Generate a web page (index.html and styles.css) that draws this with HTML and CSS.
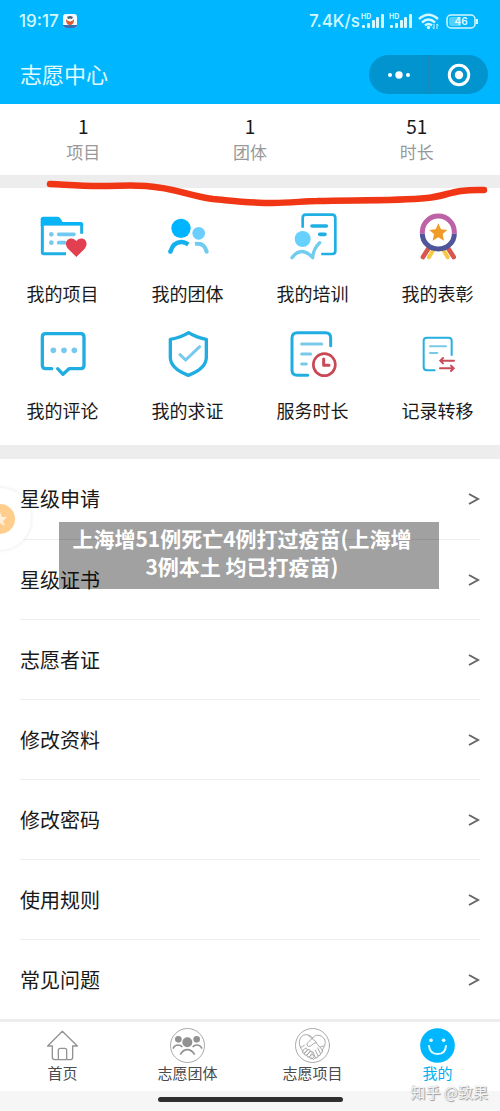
FILE: index.html
```html
<!DOCTYPE html>
<html lang="zh-CN">
<head>
<meta charset="utf-8">
<meta name="viewport" content="width=device-width, initial-scale=1">
<title>志愿中心</title>
<link rel="stylesheet" href="styles.css">
</head>
<body>
<div class="page">
  <header class="header">
    <div class="status">
      <span class="status-text">19:17</span>
      <svg class="app-badge" viewBox="0 0 14 14" aria-hidden="true"><rect width="14" height="14" rx="3" fill="#f4fbff"/><path d="M0 11H14V12Q13 14 11 14H3Q1 14 0 12Z" fill="#3970b5"/><path d="M3 5Q3 11 7 11T11 5L9 7H5Z" fill="#df5b2d"/><path d="M4 3Q7 1 10 3L9 5H5Z" fill="#526579"/><circle cx="7" cy="6" r="1.5" fill="#fff"/></svg>
      <span class="status-text rate">7.4K/s</span>
      <svg class="signal" viewBox="0 0 24 16" aria-hidden="true"><text x="0" y="6" class="hd">HD</text><g fill="#d5f7ff"><rect x="1" y="12" width="3" height="3" rx="1"/><rect x="6" y="10" width="3" height="5" rx="1"/><rect x="11" y="7" width="3" height="8" rx="1"/><rect x="15" y="4" width="3" height="11" rx="1"/><rect x="20" y="1" width="3" height="14" rx="1"/></g></svg>
      <svg class="signal second" viewBox="0 0 24 16" aria-hidden="true"><text x="0" y="6" class="hd">HD</text><g fill="#d5f7ff"><rect x="1" y="12" width="3" height="3" rx="1"/><rect x="6" y="10" width="3" height="5" rx="1"/><rect x="11" y="7" width="3" height="8" rx="1"/><rect x="15" y="4" width="3" height="11" rx="1"/><rect x="20" y="1" width="3" height="14" rx="1"/></g></svg>
      <svg class="wifi" viewBox="0 0 22 17" aria-hidden="true"><g fill="none" stroke="#d5f7ff" stroke-width="2.4"><path d="M1 6Q10.500-2.500 20 6M4 9.500Q10.500 3.500 17 9.500M7 12.500Q10.500 9.500 14 12.500"/></g><circle cx="10.500" cy="14.500" r="1.700" fill="#d5f7ff"/><path d="M16 11V16M14.500 14.500L16 16M19 16V11M20.500 12.500L19 11" stroke="#d5f7ff" fill="none"/></svg>
      <svg class="battery" viewBox="0 0 33 15" aria-hidden="true"><rect x="1" y="1" width="28" height="13" rx="4" fill="none" stroke="#d5f7ff" stroke-width="1.500"/><path d="M3 5Q3 3 5 3H15V12H5Q3 12 3 10Z" fill="#55d0ff"/><path d="M31 5V10" stroke="#d5f7ff" stroke-width="2"/><text x="15" y="11" text-anchor="middle" class="charge">46</text></svg>
    </div>
    <div class="nav">
      <h1>志愿中心</h1>
      <div class="capsule">
        <button type="button" aria-label="更多"><svg viewBox="0 0 24 24"><g fill="#fff"><circle cx="3" cy="12" r="2"/><circle cx="12" cy="12" r="3.700"/><circle cx="21" cy="12" r="2"/></g></svg></button>
        <button type="button" aria-label="关闭"><svg viewBox="0 0 24 24"><circle cx="12" cy="12" r="9.700" fill="none" stroke="#fff" stroke-width="3"/><circle cx="12" cy="12" r="4.200" fill="#fff"/></svg></button>
      </div>
    </div>
  </header>

  <main>
    <dl class="stats">
      <div><dt>项目</dt><dd>1</dd></div>
      <div><dt>团体</dt><dd>1</dd></div>
      <div><dt>时长</dt><dd>51</dd></div>
    </dl>

    <nav class="services" aria-label="服务">
      <a href="#projects"><svg viewBox="112 39 150 150"><path d="M125 75V159Q125 161 128 161H196M243 101V75Q243 72 238 72H125" fill="none" stroke="#20afe5" stroke-width="9"/><path d="M120 78V58Q120 50 128 50H170Q175 50 178 54L186 66H240Q248 66 248 76H129L125 82Z" fill="#08b4f5"/><g fill="#77c9ee"><circle cx="152" cy="103" r="7"/><circle cx="152" cy="128" r="7"/></g><path d="M174 103H220M174 128H192" stroke="#70c9f0" stroke-width="11" stroke-linecap="round"/><path d="M227 171L202 146C184 124 210 104 227 123C244 104 269 124 252 146Z" fill="#e23f51"/></svg><span>我的项目</span></a>
      <a href="#groups"><svg viewBox="487 39 150 150"><circle cx="541" cy="85" r="29" fill="#00b4ff"/><circle cx="594" cy="100" r="19" fill="#6bceff"/><path d="M509 156Q517 126 543 126Q552 126 563 133" fill="none" stroke="#16b0ec" stroke-width="13"/><circle cx="509" cy="155" r="6.500" fill="#16b0ec"/><path d="M583 132Q611 126 618 155" fill="none" stroke="#72ccef" stroke-width="12"/><circle cx="618" cy="155" r="6" fill="#72ccef"/></svg><span>我的团体</span></a>
      <a href="#training"><svg viewBox="112 39 150 150"><path d="M156 80V54Q156 44 165 44H244Q254 44 254 54V153Q254 162 244 162H215" fill="none" stroke="#20afe3" stroke-width="8" stroke-linecap="round"/><path d="M184 78H227M207 103H223" stroke="#20afe3" stroke-width="11" stroke-linecap="round"/><circle cx="156" cy="117" r="24" fill="#66d1ff"/><path d="M124 173Q152 136 186 173Q188 146 207 128" fill="none" stroke="#70cdf0" stroke-width="10" stroke-linecap="round" stroke-linejoin="round"/></svg><span>我的培训</span></a>
      <a href="#awards"><svg viewBox="487 39 150 150"><path d="M536 141L517 171M590 141L609 171" stroke="#d9564d" stroke-width="14" stroke-linecap="round"/><path d="M549 148L535 172M577 148L591 172" stroke="#f4ca45" stroke-width="12" stroke-linecap="round"/><circle cx="563" cy="97" r="46" fill="#fff"/><path d="M515 101V96A48 48 0 0 1 611 96V101" fill="none" stroke="#bd62a7" stroke-width="15"/><path d="M515 101A48 46 0 0 0 611 101" fill="none" stroke="#50569a" stroke-width="15"/><path d="M563 70L571 88L590 90L576 102L580 122L563 112L546 122L550 102L536 90L555 88Z" fill="#f09a27"/></svg><span>我的表彰</span></a>
      <a href="#comments"><svg viewBox="112 45 150 150"><path d="M153 161H135Q125 161 125 151V66Q125 56 135 56H240Q250 56 250 66V151Q250 161 240 161H205L187 178L171 161" fill="none" stroke="#20ade2" stroke-width="10" stroke-linecap="round" stroke-linejoin="round"/><g fill="#76caef"><circle cx="158" cy="106" r="8.500"/><circle cx="190" cy="106" r="8.500"/><circle cx="221" cy="106" r="8.500"/></g></svg><span>我的评论</span></a>
      <a href="#verification"><svg viewBox="487 45 150 150"><path d="M564 53Q585 67 617 73V127Q617 161 563 181Q509 161 509 127V73Q541 68 564 53Z" fill="none" stroke="#20ade2" stroke-width="10" stroke-linejoin="round"/><path d="M538 119L555 135L597 95" fill="none" stroke="#76caef" stroke-width="9" stroke-linecap="round"/></svg><span>我的求证</span></a>
      <a href="#hours"><svg viewBox="112 45 150 150"><path d="M240 92V69Q240 53 225 53H140Q124 53 124 69V166Q124 181 140 181H171" fill="none" stroke="#20ade2" stroke-width="9" stroke-linecap="round"/><path d="M153 87H213M153 117H180M153 147H167" stroke="#79c9ea" stroke-width="9" stroke-linecap="round"/><circle cx="221" cy="149" r="33" fill="#fff" stroke="#c94956" stroke-width="8"/><path d="M219 132V151H235" fill="none" stroke="#c94956" stroke-width="9" stroke-linecap="round" stroke-linejoin="round"/></svg><span>服务时长</span></a>
      <a href="#transfer"><svg viewBox="487 45 150 150"><path d="M603 120V77Q603 68 594 68H529Q519 68 519 77V156Q519 166 529 166H552" fill="none" stroke="#26b0df" stroke-width="6" stroke-linecap="round"/><path d="M538 94H586M538 114H560" stroke="#79c9ea" stroke-width="6" stroke-linecap="round"/><path d="M610 137H570M577 129L569 137L577 145M568 160H609M601 152L609 160L601 168" fill="none" stroke="#c94b59" stroke-width="6" stroke-linecap="round"/></svg><span>记录转移</span></a>
    </nav>

    <ul class="menu">
      <li><a href="#star-apply">星级申请<svg viewBox="0 0 12 14"><path d="M1 2L10 7L1 12"/></svg></a></li>
      <li><a href="#star-certificate">星级证书<svg viewBox="0 0 12 14"><path d="M1 2L10 7L1 12"/></svg></a></li>
      <li><a href="#volunteer-card">志愿者证<svg viewBox="0 0 12 14"><path d="M1 2L10 7L1 12"/></svg></a></li>
      <li><a href="#profile">修改资料<svg viewBox="0 0 12 14"><path d="M1 2L10 7L1 12"/></svg></a></li>
      <li><a href="#password">修改密码<svg viewBox="0 0 12 14"><path d="M1 2L10 7L1 12"/></svg></a></li>
      <li><a href="#rules">使用规则<svg viewBox="0 0 12 14"><path d="M1 2L10 7L1 12"/></svg></a></li>
      <li><a href="#faq">常见问题<svg viewBox="0 0 12 14"><path d="M1 2L10 7L1 12"/></svg></a></li>
    </ul>
  </main>

  <nav class="tabs" aria-label="主导航">
    <a href="#home"><svg viewBox="135 54 105 105"><path d="M187 64L143 108H157V142Q157 149 164 149H212Q218 149 218 142V108H232ZM175 149V121Q175 115 181 115H194Q200 115 200 121V149" fill="none" stroke="#929292" stroke-width="4" stroke-linejoin="round"/></svg><span>首页</span></a>
    <a href="#teams"><svg viewBox="510 54 105 105"><circle cx="562.500" cy="106.500" r="51" fill="none" stroke="#999" stroke-width="2.500"/><g fill="#929292"><circle cx="562" cy="97" r="15"/><circle cx="535" cy="88" r="10"/><circle cx="590" cy="88" r="10"/></g><path d="M541 134Q549 119 562 119T584 134M519 116Q524 105 534 105Q542 105 547 111M578 111Q583 105 591 105Q601 105 606 116" fill="none" stroke="#929292" stroke-width="5"/></svg><span>志愿团体</span></a>
    <a href="#volunteer-projects"><svg viewBox="135 54 105 105"><g fill="none" stroke="#999" stroke-width="2.500" stroke-linejoin="round" stroke-linecap="round"><circle cx="187.500" cy="106.500" r="51"/><path d="M158 123Q143 104 150 87Q158 70 175 75Q183 77 188 84Q199 70 215 79Q230 88 224 107Q220 116 216 122M188 84L172 99Q168 107 175 109Q182 111 190 101L198 98L217 120Q220 129 211 130Q214 137 204 138Q203 146 195 144L190 148L184 143M176 77L200 97M151 113L163 106M221 108L211 111M203 114L211 130M196 120L204 138M189 126L196 143"/><path d="M158 123L164 116Q169 112 172 117Q173 120 167 126L163 130Q155 131 158 123M163 130L174 119Q181 117 181 123L170 136Q162 137 163 130M170 136L181 124Q188 123 187 129L178 141Q170 143 170 136M178 141L185 134Q191 132 192 139L187 146Q180 149 178 141"/></g></svg><span>志愿项目</span></a>
    <a href="#mine" class="active" aria-current="page"><svg viewBox="510 54 105 105"><circle cx="562.500" cy="106.500" r="52" fill="#00b7ff"/><g fill="#e3faff"><circle cx="543" cy="91" r="5.500"/><circle cx="581" cy="91" r="5.500"/></g><path d="M537 108Q540 132 563 132T588 108" fill="none" stroke="#e3faff" stroke-width="6" stroke-linecap="round"/></svg><span>我的</span></a>
  </nav>
  <footer class="home-area"><div class="home-bar"></div></footer>

  <svg class="marker" viewBox="0 0 500 40" aria-hidden="true"><path d="M50 14C70 15 80 16 100 16C120 16 130 15 146 16C175 18 190 26 213 29C235 31 250 33 273 33C290 33 305 31 317 31C355 30 395 31 427 28C448 26 452 19 484 20" fill="none" stroke="#f03614" stroke-width="6.500" stroke-linecap="round"/></svg>
  <button class="float-star" type="button" aria-label="收藏"><svg viewBox="0 0 30 30"><circle cx="15" cy="15" r="15" fill="#ffcd8c"/><path d="M15 8L17 13L22 13L18 17L20 22L15 19L10 22L12 17L8 13L13 13Z" fill="#fff1dc"/></svg></button>
  <div class="caption">上海增51例死亡4例打过疫苗(上海增<br>3例本土 均已打疫苗)</div>
  <div class="watermark">知乎 @致果</div>
</div>
</body>
</html>
```

FILE: styles.css
```css
* { box-sizing: border-box; }
body { margin: 0; background: #ededed; color: #191919; font-family: "Noto Sans CJK SC", sans-serif; }
a { color: inherit; text-decoration: none; }
button { border: 0; padding: 0; background: none; }
svg { display: block; }
.page { position: relative; overflow: hidden; }

.header { background: #00b7ff; color: #e3faff; }
.status { display: flex; align-items: center; height: 42px; padding: 0 21px 0 19px; }
.status-text { font: 500 17px/24px Inter, sans-serif; color: #d5f7ff; }
.app-badge { width: 14px; height: 14px; margin-left: 4px; }
.rate { margin-left: auto; }
.signal { width: 24px; height: 16px; margin-left: 1px; }
.second { margin-left: 4px; }
.hd { font: 700 7px Inter, sans-serif; fill: #d5f7ff; }
.wifi { width: 22px; height: 17px; margin-left: 5px; }
.battery { width: 33px; height: 15px; margin-left: 6px; }
.charge { font: 600 10px Inter, sans-serif; fill: #e3faff; }
.nav { display: flex; align-items: center; justify-content: space-between; height: 62px; padding: 3px 12px 0 20px; }
h1 { margin: 0; padding-bottom: 4px; font-size: 22px; line-height: 32px; font-weight: 400; }
.capsule { display: flex; width: 119px; height: 39px; border-radius: 20px; background: #0294cf; }
.capsule button { flex: 1; display: flex; align-items: center; justify-content: center; }
.capsule button + button { border-left: 1px solid #168abb; }
.capsule svg { width: 24px; height: 24px; }

.stats { display: flex; margin: 0 0 13px; padding: 9px 0 10px; background: #fff; text-align: center; }
.stats div { flex: 1; display: flex; flex-direction: column-reverse; }
.stats dt { font-size: 17px; line-height: 26px; color: #999; }
.stats dd { margin: 0; font-size: 19px; line-height: 26px; }

.services { display: grid; grid-template-columns: repeat(4, 1fr); row-gap: 25px; padding: 25px 0 23px; margin-bottom: 14px; background: #fff; }
.services a { display: flex; flex-direction: column; align-items: center; gap: 18px; font-size: 18px; line-height: 24px; }
.services svg { width: 50px; height: 50px; }

.menu { list-style: none; margin: 0 0 3px; padding: 0 20px; background: #fff; }
.menu li + li { border-top: 1px solid #ededed; }
.menu a { position: relative; z-index: 1; display: flex; align-items: center; justify-content: space-between; height: 80px; font-size: 20px; line-height: 30px; }
.menu li + li a { height: 79px; }
.menu svg { width: 12px; height: 14px; fill: none; stroke: #666; stroke-width: 2; }

.tabs { display: grid; grid-template-columns: repeat(4, 1fr); padding: 6px 0 8px; background: #fff; color: #4b4b4b; }
.tabs a { display: flex; flex-direction: column; align-items: center; font-size: 15px; line-height: 20px; }
.tabs svg { width: 35px; height: 35px; }
.tabs .active { color: #00b0f3; }
.home-area { height: 20px; padding-top: 6px; background: #f6f6f6; }
.home-bar { width: 37%; height: 5px; margin: 0 auto; border-radius: 3px; background: #303030; }

.marker { position: absolute; top: 170px; left: 0; width: 100%; height: 40px; }
.float-star { position: absolute; top: 488px; left: -31px; display: flex; align-items: center; justify-content: center; width: 62px; height: 62px; border-radius: 50%; background: #fff; box-shadow: 0 0 4px #e6e6e6; }
.float-star svg { width: 30px; height: 30px; }
.caption { position: absolute; z-index: 2; top: 522px; left: 50%; width: 380px; margin-left: -191px; padding: 2px 18px 9px 4px; background: rgba(0, 0, 0, 0.37); color: #fff; font-size: 21px; line-height: 28px; font-weight: 700; text-align: center; }
.watermark { position: absolute; right: 12px; bottom: 10px; color: #f4f4f4; font-size: 15px; line-height: 18px; text-shadow: 1px 1px 1px #999, 0 0 1px #aaa; }
```
